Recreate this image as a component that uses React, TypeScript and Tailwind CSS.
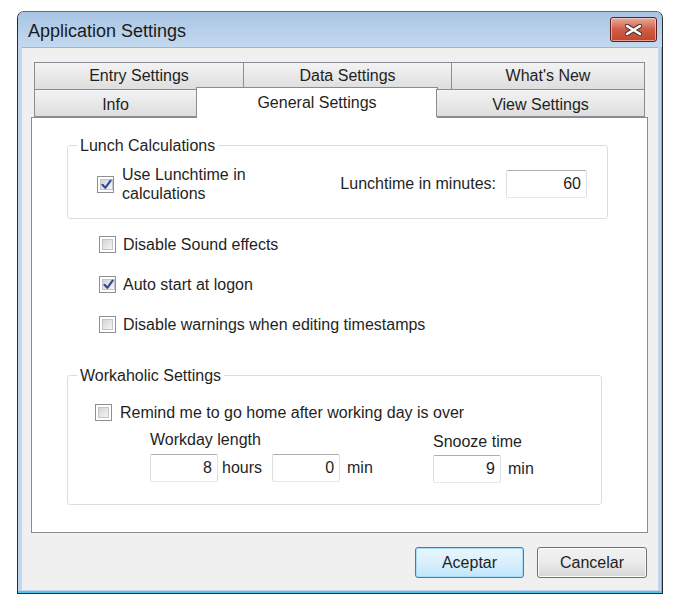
import React from 'react';

const FONT = { fontFamily: '"Liberation Sans", Arial, sans-serif' };

function Check({ checked }: { checked?: boolean }) {
  return (
    <span className="flex h-[17px] w-[17px] shrink-0 border border-[#8e8f8f] bg-white p-[2px]">
      <span className="flex flex-1 items-center justify-center border border-[#c4c4c4] bg-gradient-to-br from-[#d3d3d3] to-[#f6f6f6]">
        {checked && (
          <svg width="11" height="11" viewBox="0 0 11 11">
            <path d="M1.5 5.8 L4.3 8.8 L9.6 1.6" fill="none" stroke="#33489a" strokeWidth="2.2" strokeLinecap="round" strokeLinejoin="round" />
          </svg>
        )}
      </span>
    </span>
  );
}

function TextBox({ value, w }: { value: string; w: string }) {
  return (
    <div
      className={`${w} flex h-[28px] items-center justify-end rounded-[2px] border border-[#dbdfe6] border-t-[#abadb3] border-b-[#e3e9ef] bg-white pr-[5px] text-[16px] text-[#1f1f1f]`}
    >
      {value}
    </div>
  );
}

function Tab({ label, w, extra = '' }: { label: string; w: string; extra?: string }) {
  return (
    <div
      className={`${w} ${extra} flex h-[28px] items-center justify-center border border-[#898c95] bg-gradient-to-b from-[#f3f3f3] to-[#dedede] text-[16px] text-[#1f1f1f]`}
    >
      {label}
    </div>
  );
}

export default function App() {
  return (
    <div className="h-[604px] w-[680px] bg-white pl-[17px] pt-[11px]" style={FONT}>
      <div className="flex h-[583px] w-[646px] flex-col overflow-hidden rounded-t-[7px] border border-[#2b2b2b] border-t-[#6a6a6a] bg-[#bfd6ee] shadow-[inset_-1px_-2px_0_#4cc6ec]">
        {/* title bar */}
        <div className="flex h-[35px] shrink-0 items-center justify-between bg-gradient-to-b from-[#a9c5e4] to-[#c3d9f0] pl-[10px] pr-[5px]">
          <span className="pt-[4px] text-[18px] text-[#1b1b1b]">Application Settings</span>
          <button className="flex h-[25px] w-[47px] items-center justify-center rounded-[3px] border border-[#5b1f1f] bg-gradient-to-b from-[#e7ab9b] via-[#d05c45] to-[#c4442c] shadow-[inset_0_0_0_1px_rgba(255,220,210,0.6)]">
            <svg width="17" height="12" viewBox="0 0 17 12">
              <path d="M2 2 L15 10 M15 2 L2 10" stroke="#4d3a3a" strokeWidth="4.5" strokeLinecap="round" />
              <path d="M2 2 L15 10 M15 2 L2 10" stroke="#ffffff" strokeWidth="2.4" strokeLinecap="round" />
            </svg>
          </button>
        </div>

        {/* client area */}
        <div className="mx-[4px] mb-[3px] flex flex-1 flex-col border-t border-[#9fb6d3] bg-[#f0f0f0] pl-[9px] pt-[14px] text-[#1f1f1f]">
          {/* tabs */}
          <div className="ml-[3px] flex w-[611px] flex-col">
            <div className="flex">
              <Tab label="Entry Settings" w="w-[210px]" />
              <Tab label="Data Settings" w="w-[209px]" extra="-ml-px" />
              <Tab label="What's New" w="w-[194px]" extra="-ml-px" />
            </div>
            <div className="relative z-10 -mt-px flex h-[28px] items-end">
              <Tab label="Info" w="w-[163px]" extra="pt-[3px]" />
              <div className="-mb-[1px] -ml-px flex h-[31px] w-[242px] items-start justify-center border-x border-t border-[#898c95] bg-white pt-[3px] text-[16px]">
                General Settings
              </div>
              <Tab label="View Settings" w="w-[209px]" extra="-ml-[2px] pt-[3px]" />
            </div>
          </div>

          {/* panel */}
          <div className="flex h-[416px] w-[617px] flex-col border border-[#898c95] bg-white pl-[35px] pt-[18px] text-[16px]">
            <fieldset className="h-[83px] w-[541px] rounded-[3px] border border-[#d5dfe5]">
              <legend className="ml-[9px] px-[3px] leading-[19px]">Lunch Calculations</legend>
              <div className="mt-[10px] flex items-center justify-between pl-[29px] pr-[20px]">
                <div className="flex items-center gap-[8px]">
                  <Check checked />
                  <span className="leading-[19px]">
                    Use Lunchtime in
                    <br />
                    calculations
                  </span>
                </div>
                <div className="flex items-center gap-[10px]">
                  <span>Lunchtime in minutes:</span>
                  <TextBox value="60" w="w-[81px]" />
                </div>
              </div>
            </fieldset>

            <div className="ml-[32px] mt-[16px] flex flex-col gap-[21px]">
              <div className="flex h-[19px] items-center gap-[7px]">
                <Check />
                <span>Disable Sound effects</span>
              </div>
              <div className="flex h-[19px] items-center gap-[7px]">
                <Check checked />
                <span>Auto start at logon</span>
              </div>
              <div className="flex h-[19px] items-center gap-[7px]">
                <Check />
                <span>Disable warnings when editing timestamps</span>
              </div>
            </div>

            <fieldset className="mt-[32px] h-[139px] w-[535px] rounded-[3px] border border-[#d5dfe5]">
              <legend className="ml-[9px] px-[3px] leading-[19px]">Workaholic Settings</legend>
              <div className="mt-[18px] flex h-[19px] items-center gap-[8px] pl-[27px]">
                <Check />
                <span>Remind me to go home after working day is over</span>
              </div>
              <div className="ml-[82px] mt-[8px] flex">
                <div className="flex w-[283px] flex-col gap-[5px]">
                  <span className="leading-[19px]">Workday length</span>
                  <div className="flex items-center">
                    <TextBox value="8" w="w-[68px]" />
                    <span className="ml-[4px]">hours</span>
                    <div className="ml-[10px]">
                      <TextBox value="0" w="w-[68px]" />
                    </div>
                    <span className="ml-[7px]">min</span>
                  </div>
                </div>
                <div className="mt-[2px] flex flex-col gap-[4px]">
                  <span className="leading-[19px]">Snooze time</span>
                  <div className="flex items-center">
                    <TextBox value="9" w="w-[68px]" />
                    <span className="ml-[7px]">min</span>
                  </div>
                </div>
              </div>
            </fieldset>
          </div>

          {/* buttons */}
          <div className="mt-[14px] flex justify-end gap-[13px] pr-[11px] text-[16px]">
            <button className="h-[31px] w-[109px] rounded-[3px] border border-[#3c7fb1] bg-gradient-to-b from-[#eaf6fd] via-[#d9f0fc] to-[#bee6fd] text-[#1f1f1f] shadow-[inset_0_0_0_1px_#a8dcf7]">
              Aceptar
            </button>
            <button className="h-[31px] w-[110px] rounded-[3px] border border-[#707070] bg-gradient-to-b from-[#f2f2f2] via-[#ebebeb] to-[#d6d6d6] text-[#1f1f1f] shadow-[inset_0_0_0_1px_#fbfbfb]">
              Cancelar
            </button>
          </div>
        </div>
      </div>
    </div>
  );
}
